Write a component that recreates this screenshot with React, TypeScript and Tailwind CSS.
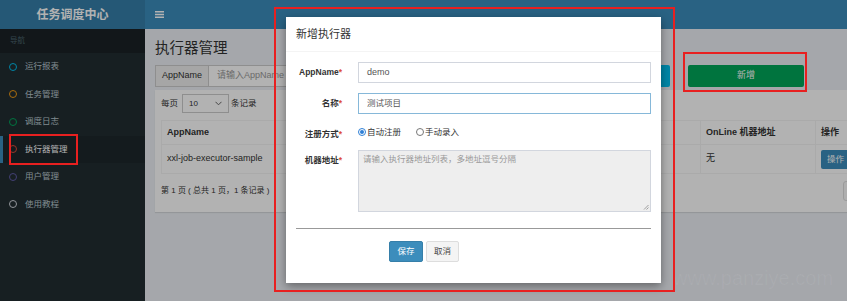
const menu = [
  { label: "运行报表", ring: "border-[#00c0ef]" },
  { label: "任务管理", ring: "border-[#f39c12]" },
  { label: "调度日志", ring: "border-[#00a65a]" },
  { label: "执行器管理", ring: "border-[#dd4b39]", active: true },
  { label: "用户管理", ring: "border-[#605ca8]" },
  { label: "使用教程", ring: "border-[#d2d6de]" },
];

function Sidebar() {
  return (
    <aside className="w-[145px] shrink-0 bg-[#222d32]">
      <div className="h-[24px] bg-[#1a2226] text-[#4b646f] text-[7.5px] flex items-center pl-[10px]">
        导航
      </div>
      {menu.map((m) => (
        <div
          key={m.label}
          className={
            m.active
              ? "h-[27.5px] flex items-center gap-[8px] pl-[6px] border-l-[3px] border-[#3c8dbc] bg-[#1e282c] text-white text-[8.5px]"
              : "h-[27.5px] flex items-center gap-[8px] pl-[9px] text-[#b8c7ce] text-[8.5px]"
          }
        >
          <span className={`w-[8px] h-[8px] rounded-full border-[1.5px] ${m.ring}`} />
          <span>{m.label}</span>
        </div>
      ))}
    </aside>
  );
}

// columns hidden under the modal are left blank
function Table() {
  const head = ["AppName", "", "", "", "OnLine 机器地址", "操作"];
  const row = ["xxl-job-executor-sample", "", "", "", "无"];
  return (
    <div className="mt-[7px] w-[728px] grid grid-cols-[169px_120px_110px_140px_115px_74px] border-t border-l border-[#f4f4f4]">
      {head.map((h, i) => (
        <div key={i} className="h-[24px] flex items-center pl-[5px] font-bold text-[9px] border-r border-b border-[#f4f4f4]">
          {h}
        </div>
      ))}
      {row.map((c, i) => (
        <div key={i} className="h-[29px] flex items-center pl-[5px] text-[9px] border-r border-b border-[#f4f4f4]">
          {c}
        </div>
      ))}
      <div className="h-[29px] flex items-center pl-[5px] border-r border-b border-[#f4f4f4]">
        <span className="h-[19px] px-[6px] flex items-center rounded-[2px] bg-[#3c8dbc] text-white text-[8.5px]">
          操作
        </span>
      </div>
    </div>
  );
}

function Content() {
  return (
    <main className="flex-1 pl-[10px] pt-[9px] text-[#333]">
      <h1 className="text-[14.5px] leading-[20px]">执行器管理</h1>
      <div className="flex h-[22px] mt-[7px]">
        <div className="w-[54px] border border-[#ccc] bg-[#eee] text-[9px] flex items-center justify-center">
          AppName
        </div>
        <div className="w-[391px] border-y border-r border-[#ccc] bg-white pl-[8px] text-[9px] text-[#999] flex items-center">
          请输入AppName
        </div>
        <div className="w-[50px] ml-[20px] rounded-[2px] bg-[#00c0ef]" />
        <div className="w-[116px] ml-[18px] rounded-[2px] bg-[#00a65a] text-white text-[9px] flex items-center justify-center">
          新增
        </div>
      </div>
      <div className="mt-[3px] w-[740px] h-[122px] bg-white pt-[4px] pl-[6px] pr-[12px] shadow-[0_1px_1px_rgba(0,0,0,0.1)]">
        <div className="flex items-center h-[19px] text-[8.5px]">
          <span>每页</span>
          <div className="ml-[4px] mr-[2px] w-[47px] h-[19px] border border-[#ccc] flex items-center justify-between px-[6px] text-[8px]">
            <span>10</span>
            <svg width="7" height="5" viewBox="0 0 7 5">
              <path d="M0.5 0.8 L3.5 3.8 L6.5 0.8" fill="none" stroke="#666" strokeWidth="1" />
            </svg>
          </div>
          <span>条记录</span>
        </div>
        <Table />
        <div className="mt-[7px] h-[20px] flex items-center text-[8px]">
          <span>第 1 页 ( 总共 1 页，1 条记录 )</span>
          <div className="flex-1" />
          <div className="w-[40px] h-[20px] border border-[#ddd] rounded-[3px] bg-[#fafafa]" />
        </div>
      </div>
    </main>
  );
}

function Label({ text, className }: { text: string; className?: string }) {
  return (
    <div className={`text-right font-bold text-[8.5px] text-[#333] whitespace-nowrap ${className ?? ""}`}>
      {text}
      <span className="text-[#dd4b39]">*</span>
    </div>
  );
}

function Radio({ checked, label }: { checked?: boolean; label: string }) {
  return (
    <div className="flex items-center gap-[1px] text-[8.5px] text-[#333]">
      <span
        className={
          checked
            ? "w-[8px] h-[8px] rounded-full border border-[#2f7fd6] bg-white flex items-center justify-center"
            : "w-[8px] h-[8px] rounded-full border border-[#777] bg-white"
        }
      >
        {checked && <span className="w-[4px] h-[4px] rounded-full bg-[#2f7fd6]" />}
      </span>
      <span>{label}</span>
    </div>
  );
}

function Modal() {
  return (
    <div className="absolute left-[286px] top-[17px] w-[375px] h-[266px] bg-white shadow-[0_3px_9px_rgba(0,0,0,0.4)]">
      <div className="h-[35px] px-[10px] flex items-center border-b border-[#f4f4f4] text-[11px] text-[#333]">
        新增执行器
      </div>
      <div className="pt-[10px] px-[10px]">
        <div className="grid grid-cols-[46px_1fr] gap-x-[16px] items-center">
          <Label text="AppName" />
          <div className="h-[21px] border border-[#d2d6de] px-[8px] text-[9px] text-[#555] flex items-center">
            demo
          </div>
        </div>
        <div className="grid grid-cols-[46px_1fr] gap-x-[16px] items-center mt-[10px]">
          <Label text="名称" />
          <div className="h-[21px] border border-[#86b8d9] px-[8px] text-[8.5px] text-[#555] flex items-center">
            测试项目
          </div>
        </div>
        <div className="grid grid-cols-[46px_1fr] gap-x-[16px] items-start mt-[10px] h-[16px]">
          <Label text="注册方式" className="pt-[4px]" />
          <div className="h-[16px] flex items-center gap-[15px]">
            <Radio checked label="自动注册" />
            <Radio label="手动录入" />
          </div>
        </div>
        <div className="grid grid-cols-[46px_1fr] gap-x-[16px] items-start mt-[10px]">
          <Label text="机器地址" className="pt-[4px]" />
          <div className="relative h-[62px] bg-[#eee] border border-[#d2d6de] pl-[4px] pt-[2px] text-[8.5px] text-[#999]">
            请输入执行器地址列表，多地址逗号分隔
            <svg className="absolute right-[1px] bottom-[1px]" width="6" height="6" viewBox="0 0 6 6">
              <path d="M1 5.5 L5.5 1 M3.5 5.5 L5.5 3.5" stroke="#888" strokeWidth="0.8" />
            </svg>
          </div>
        </div>
        <div className="mt-[16px] border-t border-[#999]" />
        <div className="mt-[12px] pl-[93px] flex gap-[3px]">
          <div className="w-[34px] h-[21px] rounded-[2px] bg-[#3c8dbc] border border-[#367fa9] text-white text-[8.5px] flex items-center justify-center">
            保存
          </div>
          <div className="w-[33px] h-[21px] rounded-[2px] bg-[#f4f4f4] border border-[#ddd] text-[#444] text-[8.5px] flex items-center justify-center">
            取消
          </div>
        </div>
      </div>
    </div>
  );
}

export default function App() {
  return (
    <div className="relative w-[847px] h-[301px] overflow-hidden bg-[#ecf0f5] font-['Liberation_Sans','Noto_Sans_CJK_SC',sans-serif]">
      <div className="flex h-[29px]">
        <div className="w-[145px] bg-[#367fa9] text-white text-[12px] font-bold flex items-center justify-center">
          任务调度中心
        </div>
        <div className="flex-1 bg-[#3c8dbc] flex items-center pl-[10px]">
          <svg width="9" height="7" viewBox="0 0 9 7">
            <path d="M0 0.75 H9 M0 3.5 H9 M0 6.25 H9" stroke="#fff" strokeWidth="1.3" />
          </svg>
        </div>
      </div>
      <div className="flex h-[272px]">
        <Sidebar />
        <Content />
      </div>

      <div className="absolute inset-0 bg-black/30" />
      <div className="absolute left-[673px] top-[266px] text-[20px] leading-[24px] text-white/[0.06] font-['Liberation_Sans',sans-serif]">
        www.panziye.com
      </div>

      <Modal />

      <div className="absolute left-[9px] top-[134px] w-[69px] h-[31px] border-2 border-[#e82020]" />
      <div className="absolute left-[274px] top-[7px] w-[401px] h-[285px] border-2 border-[#e82020]" />
      <div className="absolute left-[683px] top-[52px] w-[124px] h-[40px] border-2 border-[#e82020]" />
    </div>
  );
}
